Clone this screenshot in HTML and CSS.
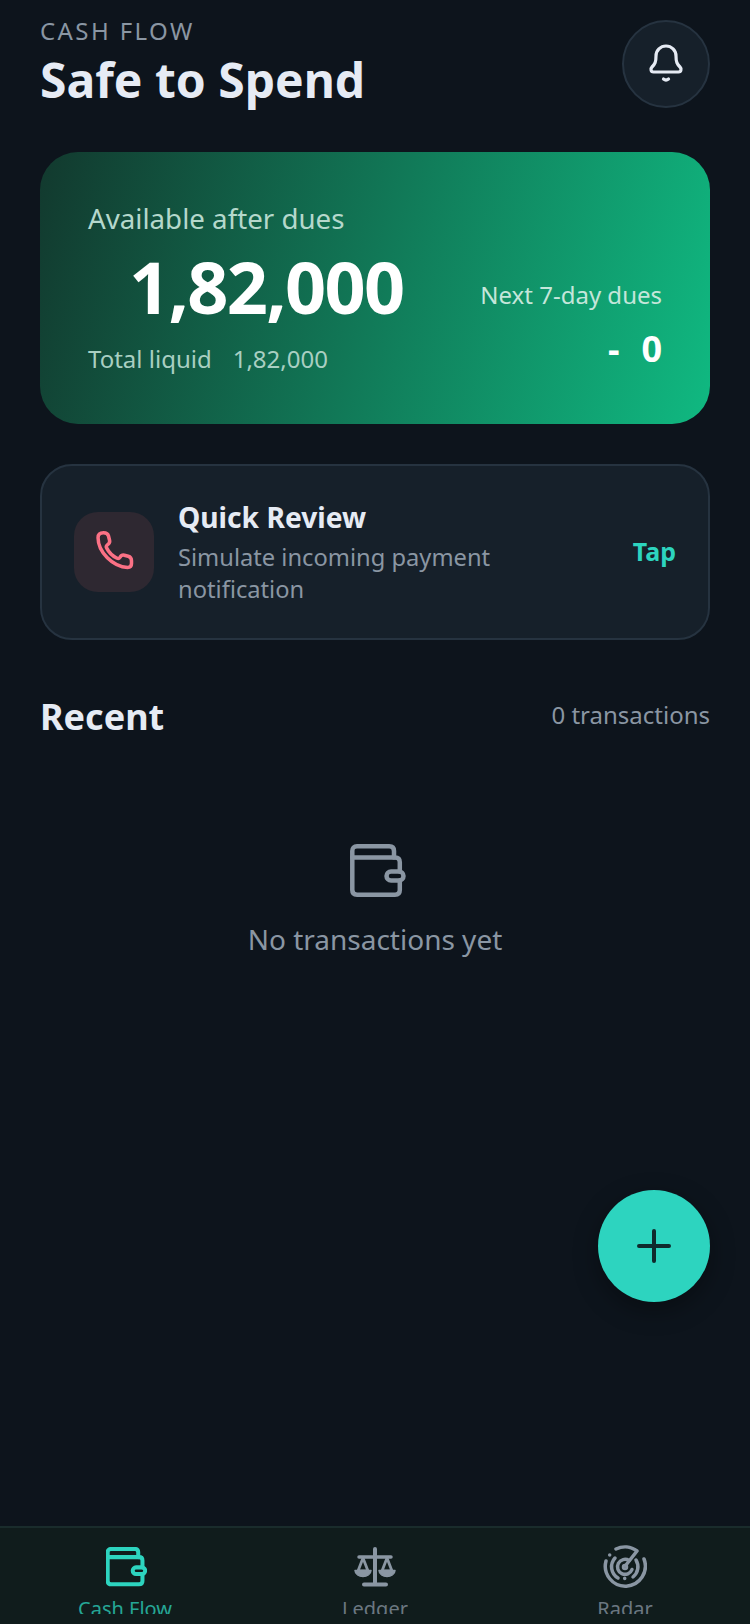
FILE: index.html
```html
<!DOCTYPE html>
<html lang="en">
<head>
  <meta charset="UTF-8">
  <title>Cash Flow</title>
  <link rel="stylesheet" href="styles.css">
</head>
<body>

<div class="screen">
  <main class="content">
    <header class="top">
      <div>
        <div class="eyebrow">CASH FLOW</div>
        <h1>Safe to Spend</h1>
      </div>
      <button class="bell">
        <svg width="38" height="40" viewBox="0 0 38 40" fill="none" stroke="#e6ebf4" stroke-width="3.2" stroke-linecap="round" stroke-linejoin="round">
          <path d="M5 23c3-3 4-5 4-11a10 10 0 0 1 20 0c0 6 1 8 4 11 1.500 1.500 1.500 5-1.500 5h-25c-3 0-3-3.500-1.500-5z"/>
          <path d="M16.500 35c1.500 1.200 3.500 1.200 5 0"/>
        </svg>
      </button>
    </header>

    <section class="balance">
      <div class="balance-label">Available after dues</div>
      <div class="balance-row">
        <div class="balance-main">
          <div class="balance-amount">1,82,000</div>
          <div class="balance-total">Total liquid<span class="total-value">1,82,000</span></div>
        </div>
        <div class="balance-dues">
          <div class="dues-label">Next 7-day dues</div>
          <div class="dues-value"><span>-</span><span>0</span></div>
        </div>
      </div>
    </section>

    <section class="review">
      <div class="review-icon">
        <svg width="44" height="44" viewBox="-2 0 40 40" fill="none" stroke="#fb7185" stroke-width="3.200" stroke-linecap="round" stroke-linejoin="round">
          <path d="M3.500 7c0-3 2-4.500 5-4.500 2.500 0 4 1 4.500 3l1 4c.4 1.800-.3 3-2 4-1.200.8-1.300 1.700-.6 3 2 4 5 7 9 9 1.300.7 2.200.6 3-.6 1-1.700 2.200-2.400 4-2l3.500 1c1.800.5 3 2 3 4v2.500c0 2.500-1 3.600-3.500 3.600C17 33.500 3.500 20 3.500 7z"/>
        </svg>
      </div>
      <div class="review-text">
        <div class="review-title">Quick Review</div>
        <div class="review-sub">Simulate incoming payment notification</div>
      </div>
      <div class="review-tap">Tap</div>
    </section>

    <div class="recent-head">
      <h2>Recent</h2>
      <span class="recent-count">0 transactions</span>
    </div>

    <div class="empty">
      <svg class="empty-icon" width="56" height="54" viewBox="0 0 56 54" fill="none" stroke="#8a96a3" stroke-width="4.500" stroke-linecap="round" stroke-linejoin="round">
        <path d="M44 13.500V7c0-3-1.700-4.700-4.700-4.700H7C4 2.300 2.300 4 2.300 7v39c0 3 1.700 4.700 4.700 4.700h38c3 0 4.800-1.700 4.800-4.700v-9.500"/>
        <path d="M2.300 13.500h42.700c3 0 4.800 1.700 4.800 4.700v9.300"/>
        <rect x="36.500" y="27.500" width="17" height="9" rx="4.500"/>
      </svg>
      <div class="empty-text">No transactions yet</div>
    </div>
  </main>

  <button class="fab">
    <svg width="36" height="36" viewBox="0 0 36 36" fill="none" stroke="#0f2a2c" stroke-width="4" stroke-linecap="round">
      <path d="M18 3v30M3 18h30"/>
    </svg>
  </button>

  <nav class="tabs">
    <div class="tab tab-active">
      <svg class="tab-wallet" width="41" height="40" viewBox="0 0 56 54" fill="none" stroke="currentColor" stroke-width="5.500" stroke-linecap="round" stroke-linejoin="round">
        <path d="M44 13.500V7c0-3-1.700-4.700-4.700-4.700H7C4 2.300 2.300 4 2.300 7v39c0 3 1.700 4.700 4.700 4.700h38c3 0 4.800-1.700 4.800-4.700v-9.500"/>
        <path d="M2.300 13.500h42.700c3 0 4.800 1.700 4.800 4.700v9.300"/>
        <rect x="36.500" y="27.500" width="17" height="9" rx="4.500"/>
      </svg>
      <span class="tab-label">Cash Flow</span>
    </div>
    <div class="tab">
      <svg width="42" height="40" viewBox="0 0 42 40" fill="none" stroke="currentColor" stroke-width="3.500" stroke-linecap="round" stroke-linejoin="round">
        <path d="M21 2v35M10 37.500h22" stroke-width="4"/>
        <path d="M5 10h32"/>
        <path d="M9 11L4 24h10zM33 11l-5 13h10z" stroke-width="2.800"/>
        <path d="M1 23.500h16c-.5 8-15.500 8-16 0zM25 23.500h16c-.5 8-15.500 8-16 0z" fill="currentColor" stroke-width="1.500"/>
      </svg>
      <span class="tab-label">Ledger</span>
    </div>
    <div class="tab">
      <svg class="tab-radar" width="44" height="44" viewBox="0 0 44 44" fill="none" stroke="currentColor" stroke-width="3.500" stroke-linecap="round" stroke-linejoin="round">
        <path d="M13 4A20 20 0 0 1 34 6L23 20"/>
        <path d="M41 14A20 20 0 1 1 3 16"/>
        <path d="M12 13A13 13 0 0 0 15 33"/>
        <path d="M33 15A13 13 0 0 1 30 32"/>
        <path d="M26 15.500A7.500 7.500 0 1 0 29 24.500"/>
        <circle cx="22" cy="22" r="1.500"/>
        <path d="M6.700 10v.1M21.700 33.300v.1"/>
      </svg>
      <span class="tab-label">Radar</span>
    </div>
  </nav>
</div>

</body>
</html>
```

FILE: styles.css
```css
* {
  box-sizing: border-box;
}

html, body {
  margin: 0;
  height: 100%;
  background: #0d141c;
  font-family: "Noto Sans", sans-serif;
}

.screen {
  position: relative;
  display: flex;
  flex-direction: column;
  height: 1624px;
  overflow: hidden;
}

.content {
  flex: 1;
  padding: 14px 40px 0;
}

.top {
  display: flex;
  justify-content: space-between;
  align-items: flex-start;
  height: 138px;
}

.eyebrow {
  font-size: 24px;
  line-height: 34px;
  letter-spacing: 2.400px;
  color: #8a96a3;
}

h1 {
  margin: 2px 0 0;
  font-size: 48px;
  line-height: 60px;
  font-weight: 700;
  color: #e6ebf4;
}

.bell {
  display: flex;
  align-items: center;
  justify-content: center;
  width: 88px;
  height: 88px;
  margin-top: 6px;
  padding: 0;
  border: 2px solid #263340;
  border-radius: 50%;
  background: #16202a;
}

.balance {
  height: 272px;
  padding: 48px 48px 0;
  border-radius: 38px;
  background: linear-gradient(105deg, #12392e 0%, #10b981 100%);
}

.balance-label {
  margin-bottom: 2px;
  font-size: 27.700px;
  line-height: 36px;
  color: #b5d8cc;
}

.balance-row {
  display: flex;
  justify-content: space-between;
}

.balance-main {
  flex: 1;
}

.balance-amount {
  margin-top: 2px;
  padding-left: 41px;
  font-size: 72px;
  line-height: 92px;
  font-weight: 700;
  letter-spacing: -1.700px;
  color: #fff;
}

.balance-total {
  margin-top: 11px;
  font-size: 24px;
  line-height: 32px;
  color: #a9cfc2;
}

.total-value {
  margin-left: 21px;
}

.balance-dues {
  padding-top: 41px;
  text-align: right;
}

.dues-label {
  font-size: 24px;
  line-height: 32px;
  color: #c4e6da;
}

.dues-value {
  display: flex;
  justify-content: flex-end;
  gap: 22px;
  margin-top: 16px;
  font-size: 36px;
  line-height: 44px;
  font-weight: 700;
  color: #fff;
}

.review {
  display: flex;
  align-items: center;
  height: 176px;
  margin-top: 40px;
  padding: 0 32px;
  border: 2px solid #263340;
  border-radius: 32px;
  background: #16202a;
}

.review-icon {
  display: flex;
  align-items: center;
  justify-content: center;
  flex: none;
  width: 80px;
  height: 80px;
  margin-right: 24px;
  border-radius: 24px;
  background: #2e2831;
}

.review-text {
  flex: 1;
  max-width: 340px;
  padding-bottom: 1px;
}

.review-title {
  font-size: 28.200px;
  line-height: 38px;
  font-weight: 700;
  color: #e6ebf4;
}

.review-sub {
  margin-top: 5px;
  font-size: 23.700px;
  line-height: 32px;
  color: #8a96a3;
}

.review-tap {
  margin-left: auto;
  margin-bottom: 3px;
  font-size: 25px;
  font-weight: 700;
  color: #2dd4bf;
}

.recent-head {
  display: flex;
  justify-content: space-between;
  align-items: center;
  margin-top: 48px;
}

h2 {
  margin: 0;
  padding-top: 6px;
  font-size: 36px;
  line-height: 46px;
  font-weight: 700;
  color: #e6ebf4;
}

.recent-count {
  font-size: 24px;
  color: #8a96a3;
}

.empty {
  display: flex;
  flex-direction: column;
  align-items: center;
  margin-top: 104px;
}

.empty-icon {
  margin-left: 6px;
}

.empty-text {
  margin-top: 22px;
  font-size: 28px;
  line-height: 38px;
  color: #8a96a3;
}

.fab {
  position: absolute;
  right: 40px;
  top: 1190px;
  display: flex;
  align-items: center;
  justify-content: center;
  width: 112px;
  height: 112px;
  padding: 0;
  border: none;
  border-radius: 50%;
  background: #2dd4bf;
  box-shadow: 0 8px 24px rgba(0, 0, 0, 0.35);
}

.tabs {
  display: flex;
  flex: none;
  height: 98px;
  border-top: 2px solid #1a2c2c;
  background: #101c1c;
}

.tab {
  flex: 1;
  display: flex;
  flex-direction: column;
  align-items: center;
  height: 86px;
  padding-top: 19px;
  overflow: hidden;
  color: #8a96a3;
}

.tab svg {
  flex: none;
}

.tab .tab-wallet {
  margin-left: 3px;
}

.tab .tab-radar {
  margin: -2px 0;
}

.tab-active {
  color: #2dd4bf;
}

.tab-label {
  flex: none;
  margin-top: 8px;
  font-size: 20px;
  line-height: 28px;
  opacity: 0.75;
}
```
